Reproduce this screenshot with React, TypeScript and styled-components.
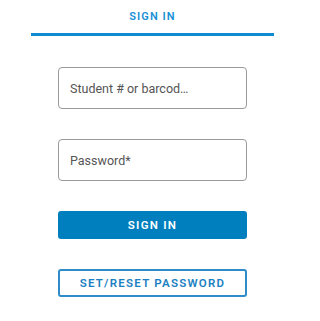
import React from 'react'
import styled, { createGlobalStyle } from 'styled-components'

const GlobalStyle = createGlobalStyle`
  html, body {
    margin: 0;
    padding: 0;
    background: #ffffff;
    font-family: Roboto, "Liberation Sans", Arial, sans-serif;
  }
`

const Page = styled.div`
  width: 300px;
  display: flex;
  flex-direction: column;
`

const Tabs = styled.div`
  display: flex;
  margin: 0 26px 0 31px;
`

const Tab = styled.div<{ active?: boolean }>`
  flex: 1;
  height: 36px;
  display: flex;
  align-items: center;
  justify-content: center;
  box-sizing: border-box;
  font-size: 11px;
  font-weight: 600;
  letter-spacing: 1.1px;
  color: #1a8fd6;
  border-bottom: 3px solid ${(p) => (p.active ? '#0e8ad3' : 'transparent')};
`

const Form = styled.form`
  display: flex;
  flex-direction: column;
  width: 189px;
  margin: 31px 0 0 58px;
`

const Field = styled.input`
  height: 42px;
  box-sizing: border-box;
  border: 1px solid #9a9a9a;
  border-radius: 4px;
  padding: 0 11px;
  font-family: inherit;
  font-size: 12.5px;
  color: #444;
  margin-bottom: 30px;
  outline: none;

  &::placeholder {
    color: #555;
    opacity: 1;
  }
`

const Button = styled.button<{ variant: 'solid' | 'outline' }>`
  height: 28px;
  box-sizing: border-box;
  border-radius: 3px;
  font-family: inherit;
  font-size: 11.5px;
  font-weight: 600;
  letter-spacing: 1.25px;
  cursor: pointer;
  background: ${(p) => (p.variant === 'solid' ? '#007fbe' : '#ffffff')};
  color: ${(p) => (p.variant === 'solid' ? '#ffffff' : '#1a80c2')};
  border: ${(p) => (p.variant === 'solid' ? 'none' : '2px solid #2f8cc8')};
  margin-bottom: 30px;
`

export default function App() {
  return (
    <>
      <GlobalStyle />
      <Page>
        <Tabs>
          <Tab active>SIGN IN</Tab>
        </Tabs>
        <Form onSubmit={(e) => e.preventDefault()}>
          <Field type="text" placeholder="Student # or barcod…" />
          <Field type="password" placeholder="Password*" />
          <Button type="submit" variant="solid">
            SIGN IN
          </Button>
          <Button type="button" variant="outline">
            SET/RESET PASSWORD
          </Button>
        </Form>
      </Page>
    </>
  )
}
